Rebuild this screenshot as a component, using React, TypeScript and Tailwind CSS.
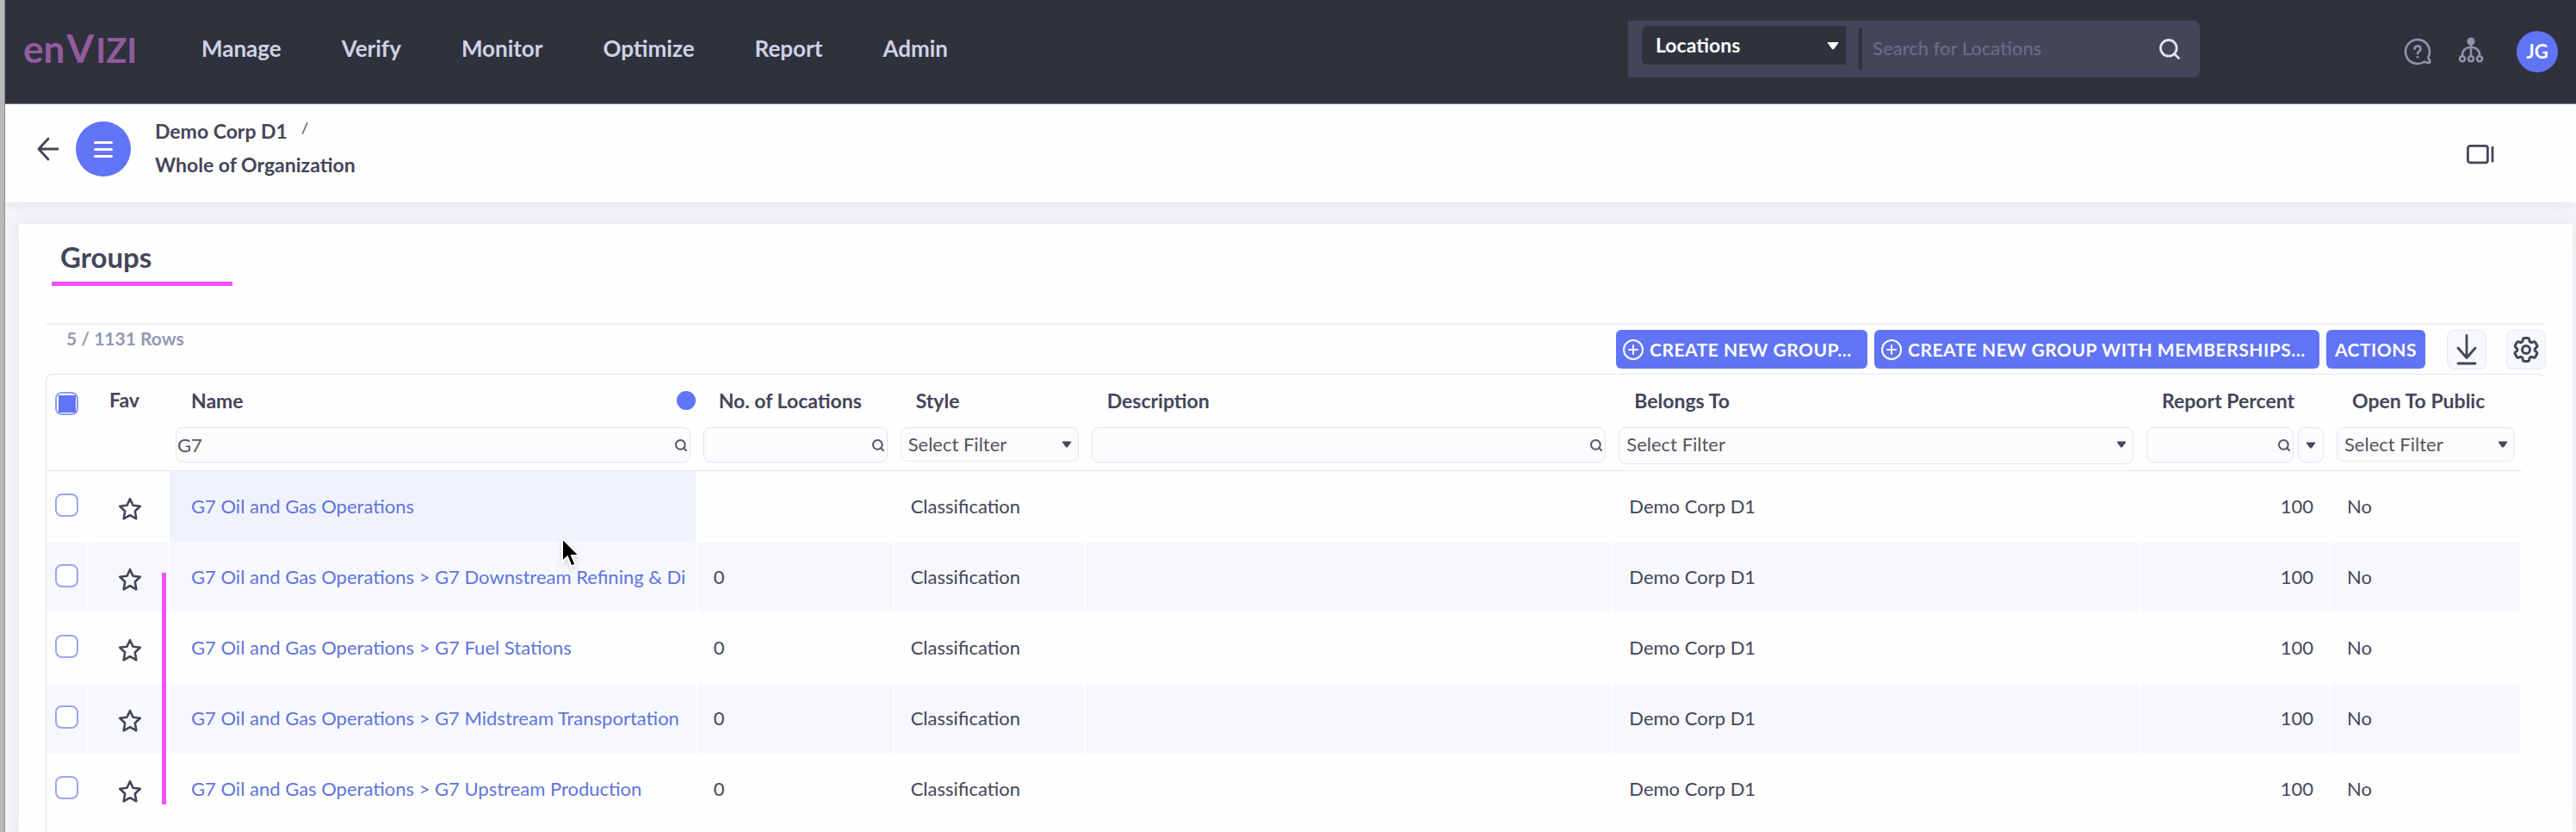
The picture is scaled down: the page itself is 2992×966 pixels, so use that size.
import type { ReactNode } from "react";
import { Search } from "lucide-react";
import { HiOutlineCog6Tooth } from "react-icons/hi2";

const NAV = ["Manage", "Verify", "Monitor", "Optimize", "Report", "Admin"];

type Row = { name: string; locations: string };

const ROWS: Row[] = [
  { name: "G7 Oil and Gas Operations", locations: "" },
  { name: "G7 Oil and Gas Operations > G7 Downstream Refining & Di", locations: "0" },
  { name: "G7 Oil and Gas Operations > G7 Fuel Stations", locations: "0" },
  { name: "G7 Oil and Gas Operations > G7 Midstream Transportation", locations: "0" },
  { name: "G7 Oil and Gas Operations > G7 Upstream Production", locations: "0" },
];

function Caret({ className }: { className: string }) {
  return (
    <svg viewBox="0 0 12 8" className={className} aria-hidden="true">
      <path d="M1 1h10L6.8 6.8q-.8.9-1.6 0z" fill="currentColor" stroke="currentColor" strokeLinejoin="round" />
    </svg>
  );
}

function Logo() {
  return (
    <a href="#home" className="flex w-[132px] shrink-0 items-baseline gap-[2px] font-bold leading-[60px] text-[#935b9d]">
      <span className="text-[44px]">en</span>
      <span className="text-[46px]">V</span>
      <span className="text-[40px]">IZI</span>
    </a>
  );
}

function HelpIcon() {
  return (
    <svg viewBox="0 0 32 32" className="size-8" fill="none" stroke="currentColor" strokeWidth="2.6" strokeLinecap="round" strokeLinejoin="round">
      <path d="M28.400 22.400A14 14 0 1 0 22.400 28.400q1.800-.9 3.400-.2 2.600 1 4.200.6.900-1.400-.6-3.400-.9-1.400-1-3z" />
      <path d="M12.600 12.800a3.400 3.400 0 1 1 5 3c-1.200.7-1.600 1.300-1.600 2.500" />
      <circle cx="16" cy="22.300" r="1" fill="currentColor" strokeWidth="1" />
    </svg>
  );
}

function HierarchyIcon() {
  return (
    <svg viewBox="0 0 30 30" className="size-[30px]" fill="none" stroke="currentColor" strokeWidth="2.6">
      <circle cx="15" cy="5" r="4.600" fill="currentColor" stroke="none" />
      <path d="M15 8v14M5 22v-1.500a8.500 8.500 0 0 1 8.500-8.500h3a8.500 8.500 0 0 1 8.500 8.500V22" />
      <circle cx="5" cy="25.300" r="3" />
      <circle cx="15" cy="25.300" r="3" />
      <circle cx="25" cy="25.300" r="3" />
    </svg>
  );
}

function PlusCircle() {
  return (
    <svg viewBox="0 0 24 24" className="size-6 shrink-0" fill="none" stroke="currentColor" strokeWidth="2" strokeLinecap="round">
      <circle cx="12" cy="12" r="11" />
      <path d="M12 7v10M7 12h10" />
    </svg>
  );
}

function Star() {
  return (
    <svg viewBox="0 0 28 28" className="size-7" fill="none" stroke="currentColor" strokeWidth="2.600" strokeLinejoin="round">
      <path d="M14 2.200l3.500 7.600 8.300 1-6 5.700 1.500 8.800L14 21.200l-7.300 4.100 1.500-8.800-6-5.700 8.300-1z" />
    </svg>
  );
}

function TextFilter({ label, value }: { label: string; value?: string }) {
  return (
    <div className="flex h-[41px] min-w-0 flex-1 items-center rounded-lg border border-[#e4e6f0] bg-[#fcfcfe] pr-[2px]">
      <input
        aria-label={label}
        defaultValue={value}
        className="h-full min-w-0 flex-1 bg-transparent px-px font-normal text-[#55555c] outline-none"
      />
      <Search className="size-4 shrink-0 text-[#55566a]" strokeWidth={3} />
    </div>
  );
}

function SelectFilter({ label, tall }: { label: string; tall?: boolean }) {
  return (
    <div className="relative min-w-0 flex-1">
      <select
        aria-label={label}
        className={
          (tall ? "h-[43px] pb-1" : "h-10 pb-px") +
          " w-full appearance-none rounded-lg border border-[#e4e6f0] bg-[#fcfcfe] pl-2 pr-7 font-normal text-[#55555c] outline-none"
        }
      >
        <option>Select Filter</option>
      </select>
      <Caret className="pointer-events-none absolute right-2 top-4 h-2 w-3 text-[#44465a]" />
    </div>
  );
}

function HeadCell({ label, filter, extra }: { label: string; filter: ReactNode; extra?: ReactNode }) {
  return (
    <th scope="col" className="text-left">
      <div className="flex h-[59px] items-center justify-between pl-[25px]">
        <span className="whitespace-nowrap text-[23px] font-bold">{label}</span>
        {extra}
      </div>
      <div className="flex h-[52px] items-start gap-[5px] pl-[7px] pr-2 pt-[2px]">{filter}</div>
    </th>
  );
}

const BUTTON =
  "flex h-[45px] items-center gap-[7px] whitespace-nowrap rounded-md bg-[#6174f5] text-[21px] font-bold uppercase tracking-wide text-white";

export default function App() {
  return (
    <div className="flex min-h-screen bg-[#f5f6fa] font-[Lato,'Noto_Sans',sans-serif] text-[22px] leading-7 text-[#44465a]">
      <div className="w-[6px] shrink-0 border-r border-[#8d8d8d] bg-[#b8b8b8]" />
      <div className="relative flex min-w-0 flex-1 flex-col overflow-x-clip">
        <header className="flex h-[121px] shrink-0 items-start border-b border-[#77787f] bg-[#2f313d] pl-[21px] pr-[21px]">
          <div className="flex h-[114px] items-center">
            <Logo />
          </div>
          <nav className="ml-[75px] flex h-[112px] items-center gap-[70px] text-[26px] font-bold text-[#cfd2e4]">
            {NAV.map((item) => (
              <a key={item} href={"#" + item.toLowerCase()}>
                {item}
              </a>
            ))}
          </nav>
          <form className="ml-auto mt-6 flex h-[66px] w-[664px] items-center rounded-r-lg bg-[#44455a] pl-4 pr-[21px]" role="search">
            <div className="relative -mt-[10px] w-[237px] shrink-0">
              <select
                aria-label="Search in"
                className="block h-[45px] w-full appearance-none rounded-l-md bg-[#2f313d] pl-4 pr-9 text-[23px] font-bold text-white outline-none"
              >
                <option>Locations</option>
              </select>
              <Caret className="pointer-events-none absolute right-2 top-[18px] h-[10px] w-[14px] text-white" />
            </div>
            <span className="ml-[15px] h-12 w-1 bg-[#2f313d]" />
            <input
              aria-label="Search for Locations"
              placeholder="Search for Locations"
              className="ml-3 h-11 min-w-0 flex-1 bg-transparent pb-1 font-medium text-white outline-none placeholder:text-[#6a6c86]"
            />
            <button type="button" aria-label="Search" className="text-[#dfe2f2]">
              <Search className="block size-7" strokeWidth={2.4} />
            </button>
          </form>
          <div className="ml-[237px] flex h-[119px] items-center text-[#8f94ad]">
            <button type="button" aria-label="Help">
              <HelpIcon />
            </button>
            <button type="button" aria-label="Hierarchy" className="-mt-1 ml-[31px]">
              <HierarchyIcon />
            </button>
            <button
              type="button"
              className="ml-[38px] flex size-12 items-center justify-center rounded-full bg-[#6174f5] text-[22px] font-bold text-white"
            >
              JG
            </button>
          </div>
        </header>

        <div className="relative flex h-[114px] shrink-0 items-center bg-[#fefefe] pb-[10px] pl-9 pr-[94px] shadow-[0_2px_14px_rgba(60,60,80,0.12)]">
          <button type="button" aria-label="Back">
            <svg viewBox="0 0 28 28" className="size-7" fill="none" stroke="currentColor" strokeWidth="2.800" strokeLinecap="round" strokeLinejoin="round">
              <path d="M25 14H3M14 2L3 14l11 12" />
            </svg>
          </button>
          <button
            type="button"
            aria-label="Menu"
            className="ml-[18px] flex size-16 flex-col items-center justify-center gap-[5px] rounded-full bg-[#6174f5]"
          >
            <span className="h-[3px] w-[22px] rounded-sm bg-white" />
            <span className="h-[3px] w-[22px] rounded-sm bg-white" />
            <span className="h-[3px] w-[22px] rounded-sm bg-white" />
          </button>
          <div className="ml-[28px] flex flex-col gap-[11px] pb-[3px] text-[23px] font-bold">
            <div className="flex items-start gap-4">
              <a href="#demo-corp">Demo Corp D1</a>
              <span className="text-lg font-normal leading-5">/</span>
            </div>
            <span>Whole of Organization</span>
          </div>
          <button type="button" aria-label="Toggle side panel" className="ml-auto mt-3">
            <svg viewBox="0 0 34 24" className="h-6 w-[34px]" fill="none" stroke="currentColor" strokeWidth="2.800" strokeLinecap="round">
              <rect x="2.400" y="2.400" width="23" height="19.400" rx="2.500" />
              <path d="M31 4.200v16" />
            </svg>
          </button>
        </div>

        <main className="ml-4 mr-1 mt-[25px] flex flex-1 flex-col bg-[#fefefe] px-[31px] shadow-[0_0_20px_rgba(60,60,80,0.1)]">
          <div className="ml-[7px] flex h-[72px] w-[210px] shrink-0 items-center border-b-[5px] border-[#ee52f8] pl-[10px] pt-2">
            <h1 className="text-[33px] font-bold leading-10">Groups</h1>
          </div>

          <div className="mt-[43px] flex h-[59px] shrink-0 items-start justify-between rounded-t-sm border-t-2 border-[#eff0f8] pl-6">
            <p className="pt-[2px] text-[21px] font-bold leading-7 text-[#8f9bb3]">5 / 1131 Rows</p>
            <div className="flex gap-2 pt-[6px]">
              <button type="button" className={BUTTON + " w-[292px] pl-2"}>
                <PlusCircle />
                Create new group...
              </button>
              <button type="button" className={BUTTON + " w-[517px] pl-2"}>
                <PlusCircle />
                Create new group with memberships...
              </button>
              <button type="button" className={BUTTON + " w-[115px] justify-center"}>
                Actions
              </button>
              <button
                type="button"
                aria-label="Download"
                className="ml-[17px] flex size-[46px] items-center justify-center rounded-lg border border-[#e6e8f2] bg-[#f7f8fd]"
              >
                <svg viewBox="0 0 24 36" className="h-9 w-6" fill="none" stroke="currentColor" strokeWidth="2.800" strokeLinecap="round" strokeLinejoin="round">
                  <path d="M12 1.500v26M2 16l10 11.500L22 16M2 34h20" />
                </svg>
              </button>
              <button
                type="button"
                aria-label="Table settings"
                className="ml-[15px] flex size-[46px] items-center justify-center rounded-lg border border-[#e6e8f2] bg-[#f7f8fd]"
              >
                <HiOutlineCog6Tooth className="size-9" strokeWidth={2} />
              </button>
            </div>
          </div>

          <div className="relative flex-1 rounded-t-lg border-l border-t border-[#e4e6f0] pr-7">
            <table className="w-full table-fixed border-separate border-spacing-0">
              <colgroup>
                <col className="w-[49px]" />
                <col className="w-[94px]" />
                <col />
                <col className="w-[229px]" />
                <col className="w-[222px]" />
                <col />
                <col />
                <col className="w-[221px]" />
                <col className="w-[222px]" />
              </colgroup>
              <thead className="[&_th]:border-b [&_th]:border-[#e4e6f0] [&_th]:p-0 [&_th]:align-top">
                <tr>
                  <th scope="col">
                    <label className="relative ml-[10px] mt-5 block size-[27px]">
                      <input
                        type="checkbox"
                        aria-label="Select all rows"
                        className="block size-[27px] appearance-none rounded-lg border-2 border-[#8f9de9] bg-white"
                      />
                      <span className="absolute left-1 top-1 size-5 bg-[#6174f5]" />
                    </label>
                  </th>
                  <th scope="col" className="text-left text-[23px] font-bold leading-[59px]">
                    <span className="ml-6">Fav</span>
                  </th>
                  <HeadCell
                    label="Name"
                    extra={<span className="mr-[2px] size-[22px] rounded-full bg-[#6174f5]" />}
                    filter={<TextFilter label="Filter name" value="G7" />}
                  />
                  <HeadCell label="No. of Locations" filter={<TextFilter label="Filter number of locations" />} />
                  <HeadCell label="Style" filter={<SelectFilter label="Filter style" />} />
                  <HeadCell label="Description" filter={<TextFilter label="Filter description" />} />
                  <HeadCell label="Belongs To" filter={<SelectFilter label="Filter belongs to" tall />} />
                  <HeadCell
                    label="Report Percent"
                    filter={
                      <>
                        <TextFilter label="Filter report percent" />
                        <button
                          type="button"
                          aria-label="Comparison"
                          className="flex h-[41px] w-[30px] items-center justify-center rounded-lg border border-[#e4e6f0] bg-[#fcfcfe]"
                        >
                          <Caret className="h-2 w-3" />
                        </button>
                      </>
                    }
                  />
                  <HeadCell label="Open To Public" filter={<SelectFilter label="Filter open to public" />} />
                </tr>
              </thead>
              <tbody className="[&_td]:border-r-2 [&_td]:border-[#fefefe] [&_td]:p-0 [&_td]:pl-[19px]">
                {ROWS.map((row, i) => (
                  <tr key={row.name} className={i % 2 ? "h-[82px] bg-[#f6f8fd]" : "h-[82px]"}>
                    <td className="!pl-[10px] !pb-1">
                      <input
                        type="checkbox"
                        aria-label={"Select " + row.name}
                        className="block size-[27px] appearance-none rounded-lg border-2 border-[#9aa7ea] bg-white"
                      />
                    </td>
                    <td className="!pl-[34px] !pt-[6px]">
                      <button type="button" aria-label={"Favorite " + row.name} className="block">
                        <Star />
                      </button>
                    </td>
                    <td className={i === 0 ? "bg-[#f0f3fd] !pl-[25px]" : "!pl-[25px]"}>
                      <a href="#group" className="block overflow-hidden whitespace-nowrap text-[#6074dc]">
                        {row.name}
                      </a>
                    </td>
                    <td>{row.locations}</td>
                    <td>Classification</td>
                    <td />
                    <td>Demo Corp D1</td>
                    <td className="!pr-[18px] text-right">100</td>
                    <td>No</td>
                  </tr>
                ))}
              </tbody>
            </table>
            <span className="absolute left-[134px] top-[230px] h-[269px] w-[5px] bg-[#ee52f8]" />
            <svg viewBox="0 0 24 38" className="absolute left-[597px] top-[188px] h-[38px] w-6 drop-shadow-md" aria-hidden="true">
              <path d="M2 2v27l6-5.500 4.500 11 5-2-4.500-10.500H22z" fill="#000" stroke="#fff" strokeWidth="2" />
            </svg>
          </div>
        </main>
      </div>
    </div>
  );
}
